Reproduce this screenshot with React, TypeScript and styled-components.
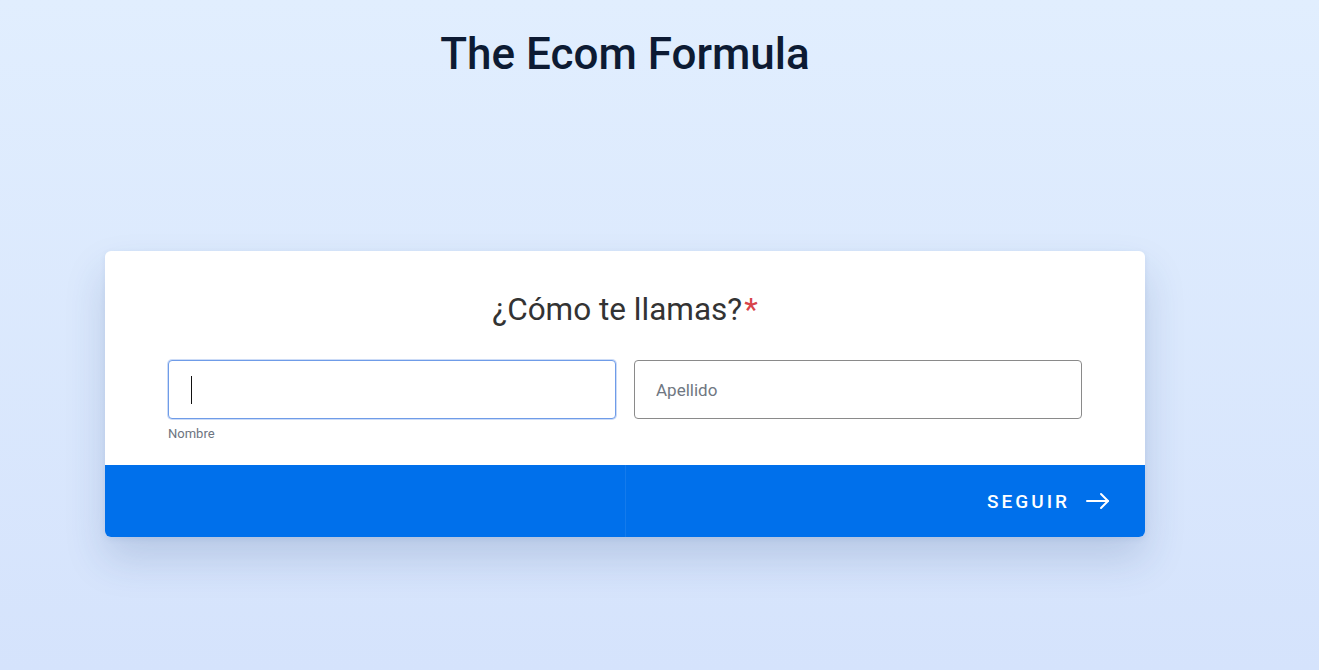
import React from 'react'
import { styled, createGlobalStyle } from 'styled-components'

const GlobalStyle = createGlobalStyle`
  html, body {
    margin: 0;
    padding: 0;
    height: 100%;
  }
  body {
    font-family: Roboto, "Liberation Sans", Arial, sans-serif;
    background: linear-gradient(to bottom, #e1eefe 0%, #d5e3fc 100%);
    min-height: 670px;
  }
`

const Page = styled.div`
  display: flex;
  flex-direction: column;
  align-items: center;
  padding: 26px 69px 0 0;
`

const Brand = styled.h1`
  margin: 0;
  font-size: 44px;
  font-weight: 500;
  line-height: 56px;
  color: #0d1b33;
`

const Card = styled.div`
  margin-top: 169px;
  width: 1040px;
  background: #fff;
  border-radius: 6px;
  overflow: hidden;
  box-shadow: 0 22px 40px rgba(40, 70, 130, 0.18), 0 2px 6px rgba(40, 70, 130, 0.08);
`

const Body = styled.div`
  padding: 41px 63px 24px;
`

const Question = styled.h2`
  margin: 0 0 32px;
  text-align: center;
  font-size: 31.5px;
  font-weight: 400;
  line-height: 36px;
  color: #333;
`

const Required = styled.span`
  color: #d8444a;
  margin-left: 2px;
`

const Fields = styled.div`
  display: grid;
  grid-template-columns: 1fr 1fr;
  gap: 18px;
`

const Field = styled.div`
  display: flex;
  flex-direction: column;
`

const Input = styled.input<{ $focused?: boolean }>`
  box-sizing: border-box;
  height: 59px;
  padding: 0 21px;
  font-family: Roboto, "Liberation Sans", Arial, sans-serif;
  font-size: 17px;
  color: #222;
  background: #fff;
  border-radius: 4px;
  outline: none;
  border: 1px solid ${p => (p.$focused ? '#6f9ce8' : '#8a8a8a')};
  box-shadow: ${p => (p.$focused ? '0 0 0 1px rgba(111,156,232,0.35)' : 'none')};
  &::placeholder {
    color: #6f7782;
  }
`

const Caret = styled.span`
  position: absolute;
  left: 23px;
  top: 16px;
  width: 1px;
  height: 28px;
  background: #111;
`

const InputWrap = styled.div`
  position: relative;
  display: flex;
  flex-direction: column;
`

const Hint = styled.label`
  margin-top: 7px;
  font-size: 13px;
  color: #6d7480;
`

const Footer = styled.div`
  display: grid;
  grid-template-columns: 520px 1fr;
  height: 72px;
  background: #0070eb;
`

const Half = styled.div<{ $divider?: boolean }>`
  display: flex;
  align-items: center;
  justify-content: flex-end;
  padding-right: 35px;
  border-left: ${p => (p.$divider ? '1px solid rgba(255,255,255,0.08)' : 'none')};
`

const NextButton = styled.button`
  display: flex;
  align-items: center;
  gap: 16px;
  padding: 0;
  border: none;
  background: transparent;
  color: #fff;
  font-family: Roboto, "Liberation Sans", Arial, sans-serif;
  font-size: 19px;
  font-weight: 500;
  letter-spacing: 3px;
  cursor: pointer;
`

const Arrow = () => (
  <svg width="24" height="18" viewBox="0 0 24 18" fill="none" stroke="#fff" strokeWidth="2" strokeLinecap="round" strokeLinejoin="round">
    <path d="M1 9h21" />
    <path d="M15 2l7 7-7 7" />
  </svg>
)

const App = () => {
  return (
    <>
      <GlobalStyle />
      <Page>
        <Brand>The Ecom Formula</Brand>
        <Card>
          <Body>
            <Question>
              ¿Cómo te llamas?<Required>*</Required>
            </Question>
            <Fields>
              <Field>
                <InputWrap>
                  <Input $focused type="text" aria-label="Nombre" />
                  <Caret />
                </InputWrap>
                <Hint>Nombre</Hint>
              </Field>
              <Field>
                <Input type="text" placeholder="Apellido" />
              </Field>
            </Fields>
          </Body>
          <Footer>
            <Half />
            <Half $divider>
              <NextButton>
                SEGUIR
                <Arrow />
              </NextButton>
            </Half>
          </Footer>
        </Card>
      </Page>
    </>
  )
}

export default App
